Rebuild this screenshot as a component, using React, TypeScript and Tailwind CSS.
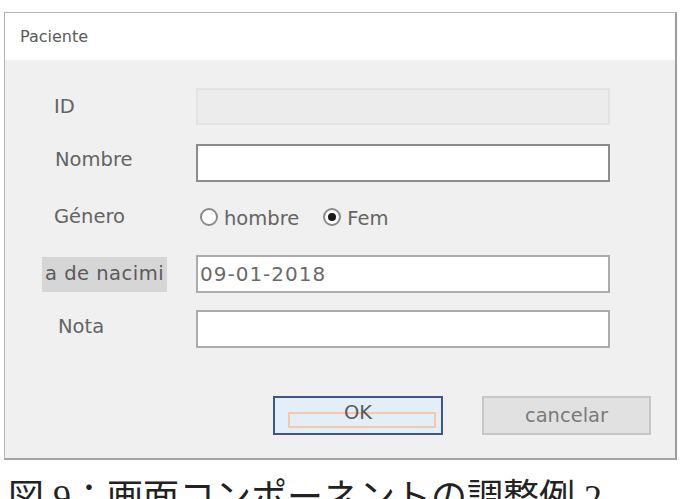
import React from "react";

const ui = { fontFamily: '"DejaVu Sans", "Liberation Sans", sans-serif' };

function Label({ text }: { text: string }) {
  return <div className="w-[191px] shrink-0 pl-[49px] text-[19.5px] text-[#646464]">{text}</div>;
}

function Radio({ label, checked }: { label: string; checked?: boolean }) {
  return (
    <div className="flex items-center gap-[6px]">
      <span className="flex h-[18px] w-[18px] items-center justify-center rounded-full border-2 border-[#8a8a8a] bg-white">
        {checked && <span className="h-[8px] w-[8px] rounded-full bg-[#1a1a1a]" />}
      </span>
      <span className="translate-y-[2px] text-[19.5px] text-[#646464]">{label}</span>
    </div>
  );
}

export default function App() {
  return (
    <div className="h-[499px] w-[681px] overflow-hidden bg-white">
      {/* dialog window */}
      <div
        className="ml-[4px] mt-[12px] flex h-[448px] w-[673px] flex-col border-l border-t border-r-2 border-b-2 border-l-[#b4b4b4] border-t-[#b4b4b4] border-r-[#9c9c9c] border-b-[#a4a4a4]"
        style={ui}
      >
        <div className="flex h-[47px] items-center bg-white pl-[15px] text-[16px] text-[#5a5a5a]">Paciente</div>

        <div className="flex flex-1 flex-col bg-[#f0f0f0] pt-[28px]">
          <div className="flex h-[37px] items-center">
            <Label text="ID" />
            <div className="h-full w-[414px] border-2 border-[#e3e3e3] bg-[#ececec]" />
          </div>

          <div className="mt-[19px] flex h-[38px] items-center">
            <div className="w-[191px] shrink-0 -translate-y-[3px] pl-[50px] text-[19.5px] text-[#646464]">Nombre</div>
            <div className="h-full w-[414px] border-2 border-[#8c8c8c] bg-white" />
          </div>

          <div className="mt-[17px] flex h-[36px] items-center">
            <Label text="Género" />
            <div className="flex items-center gap-[24px] pl-[4px]">
              <Radio label="hombre" />
              <Radio label="Fem" checked />
            </div>
          </div>

          <div className="mt-[20px] flex h-[38px] items-center">
            <div className="w-[191px] shrink-0 pl-[37px]">
              <div className="flex h-[35px] w-[125px] items-center overflow-hidden whitespace-nowrap bg-[#d6d6d6] pl-[3px] text-[19.5px] tracking-[0.5px] text-[#5a5a5a]">
                a de nacimi
              </div>
            </div>
            <div className="flex h-full w-[414px] items-center border-2 border-[#ababab] bg-white pl-[2px] text-[20px] tracking-[1px] text-[#6a6a6a]">
              09-01-2018
            </div>
          </div>

          <div className="mt-[17px] flex h-[38px] items-center">
            <div className="w-[191px] shrink-0 -translate-y-[2px] pl-[53px] text-[19.5px] text-[#646464]">Nota</div>
            <div className="h-full w-[414px] border-2 border-[#ababab] bg-white" />
          </div>

          <div className="mt-[48px] flex h-[39px] items-stretch pl-[268px]">
            <button className="relative flex w-[170px] items-center justify-center border-2 border-[#3d5787] bg-[#e3eef9] text-[19.5px] text-[#5a5a5a]">
              <span className="pointer-events-none absolute bottom-[5px] left-[13px] right-[5px] top-[14px] border-2 border-[#f2cba6]" />
              <span className="relative -translate-y-[3px]">OK</span>
            </button>
            <button className="ml-[39px] flex w-[169px] items-center justify-center border-2 border-[#c6c6c6] bg-[#e1e1e1] text-[19.5px] text-[#7a7a7a]">
              cancelar
            </button>
          </div>
        </div>
      </div>

      {/* caption, cut by the bottom edge as in the source */}
      <div
        className="ml-[8px] mt-[20px] whitespace-nowrap text-[36px] leading-[36px] text-[#222]"
        style={{ fontFamily: '"Liberation Serif", "Noto Sans CJK JP", serif' }}
      >
        図 9：画面コンポーネントの調整例 2
      </div>
    </div>
  );
}
